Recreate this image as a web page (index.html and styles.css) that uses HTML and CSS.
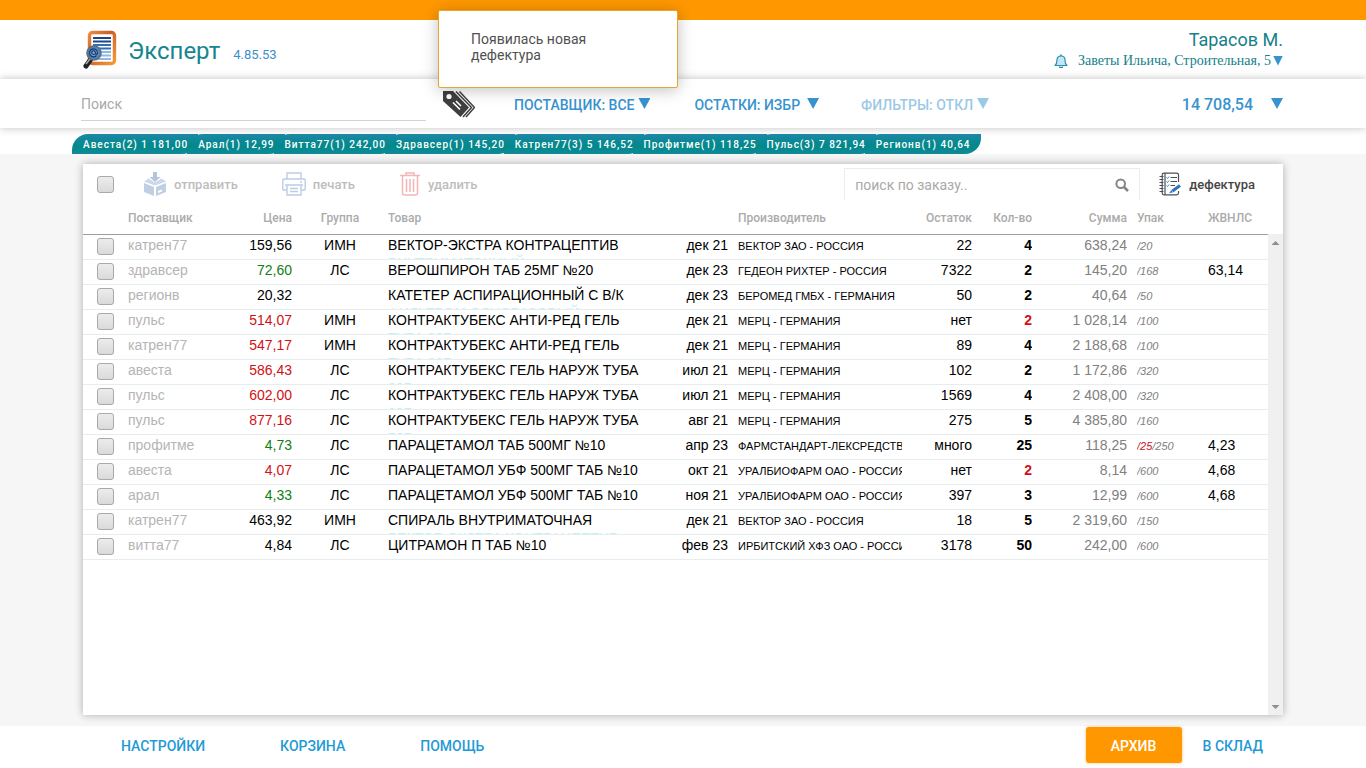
FILE: index.html
```html
<!DOCTYPE html>
<html lang="ru">
  <head>
    <meta charset="utf-8">
    <title>Эксперт</title>
    <link rel="stylesheet" href="styles.css">
  </head>
  <body>
    <div class="topline"></div>

    <header class="header">
      <div class="container header-row">
        <svg class="logo" width="34" height="40" viewBox="0 0 34 40">
          <defs>
            <linearGradient id="frame" x1="0" y1="0" x2="1" y2="1">
              <stop offset="0" stop-color="#f08a3c"/>
              <stop offset="0.4" stop-color="#c9602b"/>
              <stop offset="1" stop-color="#f79a35"/>
            </linearGradient>
            <radialGradient id="lens">
              <stop offset="0" stop-color="#8cc0ec"/>
              <stop offset="1" stop-color="#3f6fa8"/>
            </radialGradient>
          </defs>
          <rect x="6.500" y="2.500" width="25" height="31" rx="3" fill="#fff" stroke="url(#frame)" stroke-width="3.400"/>
          <path d="M10 8h18M10 11.500h18" stroke="#1c4587" stroke-width="2"/>
          <path d="M10 15h18M12 18.500h16" stroke="#2f6fb5" stroke-width="2"/>
          <path d="M16 22h12M16 25.500h12M14 29h14" stroke="#8db9e2" stroke-width="2"/>
          <path d="M8 29l-5 7" stroke="#222" stroke-width="5" stroke-linecap="round"/>
          <path d="M7 29l-4 5" stroke="#aaa" stroke-width="1.500"/>
          <circle cx="11" cy="23" r="7" fill="url(#lens)" stroke="#666f7a" stroke-width="1.600"/>
          <path d="M13.500 25.500a4 4 0 1 1 1-3c0 2.600-2.200 2.200-2.200 0a1.800 1.800 0 1 0-.5 1.300" fill="none" stroke="#143a70" stroke-width="1.200"/>
        </svg>
        <h1 class="title">Эксперт</h1>
        <span class="version">4.85.53</span>
        <div class="user">
          <div class="user-name">Тарасов М.</div>
          <button class="user-address">
            <svg class="bell" width="14" height="14" viewBox="0 0 14 14">
              <path d="M1 11.500c2-1.500 2-3 2-5.500 0-2.500 1.500-4 4-4s4 1.500 4 4c0 2.500 0 4 2 5.500z" fill="#c4e6f6" stroke="#2b8fae" stroke-width="1.200" stroke-linejoin="round"/>
              <path d="M7 2V.5M5.500 12.500a1.500 1.200 0 0 0 3 0" fill="none" stroke="#1d7f92" stroke-width="1.300"/>
            </svg>
            <span>Заветы Ильича, Строительная, 5</span>
            <i class="arrow arrow-small"></i>
          </button>
        </div>
      </div>
    </header>

    <nav class="filters">
      <div class="container filters-row">
        <input type="text" class="search" placeholder="Поиск" aria-label="Поиск">
        <button class="tags" aria-label="Метки">
          <svg width="32" height="30" viewBox="0 0 32 30">
            <path d="M0 1h10l16 16.500-8.500 9.500L0 11z" fill="#3f3f3f"/>
            <path d="M13 1.500l15.500 16-8.500 9.500M16.500 1.500l15 16-8.500 9.500" fill="none" stroke="#3f3f3f" stroke-width="1.500"/>
            <circle cx="6" cy="6.500" r="2.600" fill="#fff"/>
            <path d="M10 12.500l7 7M13 11l5 5" stroke="#fff" stroke-width="1.600"/>
          </svg>
        </button>
        <button class="filter filter-supplier">ПОСТАВЩИК: ВСЕ<i class="arrow"></i></button>
        <button class="filter filter-rest">ОСТАТКИ: ИЗБР<i class="arrow"></i></button>
        <button class="filter filter-off">ФИЛЬТРЫ: ОТКЛ<i class="arrow"></i></button>
        <button class="total">14 708,54<i class="arrow"></i></button>
      </div>
    </nav>

    <div class="suppliers">
      <div class="container suppliers-row">
        <button class="tab">Авеста(2) 1 181,00</button>
        <button class="tab">Арал(1) 12,99</button>
        <button class="tab">Витта77(1) 242,00</button>
        <button class="tab">Здравсер(1) 145,20</button>
        <button class="tab">Катрен77(3) 5 146,52</button>
        <button class="tab">Профитме(1) 118,25</button>
        <button class="tab">Пульс(3) 7 821,94</button>
        <button class="tab">Регионв(1) 40,64</button>
      </div>
    </div>

    <main class="main">
      <section class="container panel">
        <div class="toolbar">
          <input type="checkbox" class="check" aria-label="Выбрать все">
          <button class="tool tool-send">
            <svg width="24" height="26" viewBox="0 0 24 26">
              <path d="M1 12l10 4v9L1 21zM23 12l-10 4v9l10-4z" fill="#c0cfe4"/>
              <path d="M1 10.500l4.500-3 6.500 4 6.500-4 4.500 3-11 4z" fill="#cbd8ea"/>
              <path d="M10 1h4v5h3.500L12 11 6.500 6H10z" fill="#b3c4dd"/>
              <path d="M15 20l4-1.500v2L15 22z" fill="#fff"/>
            </svg>
            отправить
          </button>
          <button class="tool tool-print">
            <svg width="24" height="26" viewBox="0 0 24 26" fill="none" stroke="#bccde3" stroke-width="1.400">
              <path d="M5 8V2h14v6M5 19H2q-1.200 0-1.200-1.200V9.500Q.8 8 2.300 8h19.400q1.500 0 1.500 1.500v8.300Q23.200 19 22 19h-3"/>
              <path d="M5 14h14v10H5zM3 14h18M8 17.500h8M8 20.500h8M18 11h2"/>
            </svg>
            печать
          </button>
          <button class="tool tool-delete">
            <svg width="22" height="26" viewBox="0 0 22 26" fill="none" stroke="#f3b5b5" stroke-width="1.500">
              <path d="M1 4.500h20M7 4.500V2h8v2.500M3.500 4.500V22q0 2 2 2h11q2 0 2-2V4.500"/>
              <path d="M7.500 8v13M11 8v13M14.500 8v13"/>
            </svg>
            удалить
          </button>
          <div class="order-search">
            <input type="text" class="order-input" placeholder="поиск по заказу.." aria-label="Поиск по заказу">
            <svg width="14" height="14" viewBox="0 0 14 14" fill="none" stroke="#858585" stroke-width="2">
              <circle cx="5.700" cy="5.700" r="4.300"/>
              <path d="M9 9l4 4" stroke-width="2.500"/>
            </svg>
          </div>
          <button class="defect">
            <svg width="22" height="24" viewBox="0 0 22 24" fill="none" stroke="#4a515b" stroke-width="1.200">
              <path d="M19.500 10V3q0-1.800-1.800-1.800H5Q3.200 1.200 3.200 3v18q0 1.800 1.800 1.800h12.700q1.800 0 1.800-1.800v-2M6 1.500v21"/>
              <path d="M.5 4.500h4M.5 7.500h4M.5 10.500h4M.5 13.500h4M.5 16.500h4M.5 19.500h4"/>
              <path d="M11.500 5.500H18M11.500 9.500H18M11.500 13.500H16"/>
              <path d="M7.500 5.500l1 1 1.500-2M7.500 9.500l1 1 1.500-2M7.500 13.500l1 1 1.500-2" stroke="#3b8dc4" stroke-width="1"/>
              <path d="M21 13.500l-7.500 5.500" stroke="#2f74ba" stroke-width="3"/>
              <path d="M12.500 18l-2.500 3.200 4-1z" fill="#2f74ba" stroke="none"/>
            </svg>
            дефектура
          </button>
        </div>

        <div class="order">
          <table class="table">
            <colgroup>
              <col class="w-check"><col class="w-supplier"><col class="w-price"><col class="w-group"><col>
              <col class="w-date"><col class="w-maker"><col class="w-rest"><col class="w-count"><col class="w-sum">
              <col class="w-pack"><col class="w-vital">
            </colgroup>
            <thead>
              <tr>
                <th></th>
                <th>Поставщик</th>
                <th class="right">Цена</th>
                <th class="center">Группа</th>
                <th>Товар</th>
                <th></th>
                <th>Производитель</th>
                <th class="right">Остаток</th>
                <th class="right">Кол-во</th>
                <th class="right">Сумма</th>
                <th>Упак</th>
                <th>ЖВНЛС</th>
              </tr>
            </thead>
            <tbody id="rows"></tbody>
          </table>
          <div class="scrollbar">
            <i class="scroll-up"></i>
            <i class="scroll-down"></i>
          </div>
        </div>
      </section>
    </main>

    <footer class="footer">
      <div class="container footer-row">
        <a href="#" class="link link-settings">НАСТРОЙКИ</a>
        <a href="#" class="link link-basket">КОРЗИНА</a>
        <a href="#" class="link link-help">ПОМОЩЬ</a>
        <button class="archive">АРХИВ</button>
        <a href="#" class="link link-stock">В СКЛАД</a>
      </div>
    </footer>

    <div class="toast" role="status">Появилась новая дефектура</div>

    <script src="order.js"></script>
  </body>
</html>
```

FILE: styles.css
```css
* {
  box-sizing: border-box;
}

body {
  display: flex;
  flex-direction: column;
  min-height: 100vh;
  margin: 0;
  background: #fff;
  font-family: Roboto, sans-serif;
  font-size: 14px;
}

button {
  display: flex;
  align-items: center;
  padding: 0;
  border: none;
  background: none;
  font-family: inherit;
  cursor: pointer;
}

.container {
  width: 92%;
  max-width: 1200px;
  margin: 0 auto;
}

.arrow {
  width: 12px;
  height: 11px;
  margin-bottom: 2px;
  background: #3793d0;
  clip-path: polygon(0 0, 100% 0, 50% 100%);
}

.arrow-small {
  width: 10px;
  height: 10px;
  margin: 0 0 0 2px;
}

.topline {
  height: 20px;
  background: #ff9800;
}

/* header */

.header {
  height: 59px;
}

.header-row {
  display: flex;
  align-items: center;
  height: 100%;
}

.title {
  margin: 2px 13px 0 11px;
  color: #15868f;
  font-size: 24px;
  font-weight: 400;
}

.version {
  padding-top: 10px;
  color: #3c8fca;
  font-size: 13px;
}

.user {
  display: flex;
  flex-direction: column;
  align-items: flex-end;
  margin-left: auto;
  color: #15808a;
}

.user-name {
  font-size: 18px;
  line-height: 22px;
}

.user-address {
  color: #15808a;
  font-family: "Liberation Serif", serif;
  font-size: 14px;
  line-height: 20px;
}

.bell {
  margin-right: 10px;
}

/* filters */

.filters {
  height: 49px;
  background: #fff;
  box-shadow: 0 0 8px rgba(0, 0, 0, 0.25);
}

.filters-row {
  display: flex;
  align-items: center;
  height: 100%;
  padding-top: 2px;
}

.search {
  flex: 0 1 345px;
  min-width: 100px;
  height: 32px;
  margin-left: -2px;
  padding: 0;
  border: none;
  border-bottom: 1px solid #cfd4d8;
  outline: none;
  font-family: inherit;
  font-size: 14px;
}

.search::placeholder,
.order-input::placeholder {
  color: #a9a9a9;
}

.tags {
  margin: 0 39px 0 17px;
}

.filter,
.total {
  color: #3793d0;
  font-size: 14px;
  font-weight: 500;
  white-space: nowrap;
}

.filter .arrow {
  margin-left: 4px;
}

.filter-supplier {
  margin-right: 44px;
}

.filter-rest {
  margin-right: 42px;
}

.filter-rest .arrow {
  margin-left: 7px;
}

.filter-off {
  opacity: 0.5;
}

.total {
  gap: 18px;
  margin-left: auto;
  font-size: 16px;
}

/* supplier tabs */

.suppliers {
  height: 26px;
  padding-top: 6px;
}

.suppliers-row {
  display: flex;
}

.tab {
  flex: none;
  height: 20px;
  margin-left: -11px;
  padding: 0 10px 0 11px;
  border-radius: 16px 0 16px 0;
  background: linear-gradient(#1e87a6, #00898a 60%, #108a98);
  color: #fff;
  font-size: 10px;
  font-weight: 500;
  letter-spacing: 1px;
}

/* order panel */

.main {
  display: flex;
  flex: 1;
  padding: 10px 0 11px;
  background: #f6f6f6;
}

.panel {
  display: flex;
  flex-direction: column;
  background: #fff;
  box-shadow: 0 0 8px rgba(0, 0, 0, 0.3);
}

.toolbar {
  display: flex;
  align-items: center;
  height: 36px;
  padding: 4px 28px 0 14px;
}

.check {
  display: block;
  appearance: none;
  width: 17px;
  height: 17px;
  margin: 0;
  border: 1px solid #a9a9a9;
  border-radius: 3px;
  background: linear-gradient(#ececec, #dadada);
}

.tool,
.defect {
  font-size: 13px;
  font-weight: 500;
}

.tool {
  gap: 7px;
  color: #bdbdbd;
}

.tool-send {
  margin-left: 29px;
}

.tool-print,
.tool-delete {
  margin-left: 44px;
}

.order-search {
  display: flex;
  align-items: center;
  width: 296px;
  height: 32px;
  margin-left: auto;
  padding: 0 10px;
  border: 1px solid #ececec;
  border-bottom: none;
}

.order-input {
  flex: 1;
  min-width: 0;
  padding: 0;
  border: none;
  outline: none;
  font-family: inherit;
  font-size: 14px;
}

.defect {
  gap: 8px;
  margin-left: 19px;
  color: #454545;
}

.order {
  display: flex;
  flex: 1;
  align-items: flex-start;
}

.table {
  flex: 1;
  width: 100%;
  min-width: 0;
  table-layout: fixed;
  border-collapse: collapse;
  font-family: "Liberation Sans", Arial, sans-serif;
  font-size: 14px;
}

.w-check { width: 40px; }
.w-supplier { width: 100px; }
.w-price { width: 74px; }
.w-group { width: 86px; }
.w-date { width: 71px; }
.w-maker { width: 174px; }
.w-rest { width: 70px; }
.w-count { width: 60px; }
.w-sum { width: 95px; }
.w-pack { width: 71px; }
.w-vital { width: 65px; }

.table th {
  height: 34px;
  padding: 2px 5px 0;
  border-bottom: 1px solid #9a9f9f;
  color: #ababab;
  font-family: Roboto, sans-serif;
  font-size: 12px;
  font-weight: 500;
  text-align: left;
}

.table td {
  height: 25px;
  padding: 0 5px;
  border-bottom: 1px solid #e6eded;
  vertical-align: top;
  white-space: nowrap;
}

.table .check {
  margin: 3px 0 0 9px;
}

.cell {
  height: 24px;
  padding-top: 1px;
  line-height: 18px;
  overflow: hidden;
}

/* only the first line of a long name is readable in a row */
.product {
  padding-right: 10px;
  color: #c4eef5;
  white-space: normal;
}

.product::first-line {
  color: #000;
}

.table .right {
  text-align: right;
}

.table .center {
  text-align: center;
}

.supplier {
  color: #b5b5b5;
}

.maker {
  font-size: 11px;
  line-height: 21px;
}

.count {
  font-weight: bold;
}

.sum {
  color: #808080;
}

.pack {
  color: #808080;
  font-size: 11px;
  font-style: italic;
  line-height: 21px;
}

.red {
  color: #d40f16;
}

.green {
  color: #108010;
}

.scrollbar {
  display: flex;
  flex-direction: column;
  justify-content: space-between;
  align-items: center;
  align-self: stretch;
  width: 15px;
  margin-top: 34px;
  padding: 7px 0 6px;
  background: #f0f0f0;
}

.scroll-up,
.scroll-down {
  width: 8px;
  height: 4px;
  background: #8f8f8f;
}

.scroll-up {
  clip-path: polygon(0 100%, 100% 100%, 50% 0);
}

.scroll-down {
  clip-path: polygon(0 0, 100% 0, 50% 100%);
}

/* footer */

.footer {
  height: 42px;
  padding-top: 1px;
}

.footer-row {
  display: flex;
  align-items: center;
  padding: 0 20px 0 38px;
}

.link {
  padding-top: 1px;
  color: #1f9ad6;
  font-weight: 500;
  text-decoration: none;
}

.link-basket,
.link-help {
  margin-left: 75px;
}

.archive {
  justify-content: center;
  width: 96px;
  height: 36px;
  margin: 0 21px 0 auto;
  padding-top: 1px;
  border-radius: 3px;
  background: #ff9800;
  box-shadow: 0 0 3px rgba(255, 152, 0, 0.6);
  color: #fff;
  font-size: 14px;
  font-weight: 500;
}

.toast {
  position: absolute;
  top: 10px;
  left: 438px;
  width: 240px;
  height: 78px;
  padding: 20px 64px 20px 32px;
  border: 1px solid #e6a52f;
  border-radius: 2px;
  background: #fff;
  box-shadow: 0 2px 16px rgba(0, 0, 0, 0.25);
  color: #505050;
  font-size: 14px;
  line-height: 16px;
}
```

FILE: order.js
```js
// supplier, price, price color, group, product, date, maker, rest, count, sum, pack, vital
var order = [
  ['катрен77', '159,56', '', 'ИМН', 'ВЕКТОР-ЭКСТРА КОНТРАЦЕПТИВ ВНУТРИМАТОЧНЫЙ', 'дек 21', 'ВЕКТОР ЗАО - РОССИЯ', '22', '4', '638,24', '/20', ''],
  ['здравсер', '72,60', 'green', 'ЛС', 'ВЕРОШПИРОН ТАБ 25МГ №20', 'дек 23', 'ГЕДЕОН РИХТЕР - РОССИЯ', '7322', '2', '145,20', '/168', '63,14'],
  ['регионв', '20,32', '', '', 'КАТЕТЕР АСПИРАЦИОННЫЙ С В/К ФИЛЬТРОМ ОДНОРАЗОВЫЙ', 'дек 23', 'БЕРОМЕД ГМБХ - ГЕРМАНИЯ', '50', '2', '40,64', '/50', ''],
  ['пульс', '514,07', 'red', 'ИМН', 'КОНТРАКТУБЕКС АНТИ-РЕД ГЕЛЬ ТУБА 20Г', 'дек 21', 'МЕРЦ - ГЕРМАНИЯ', 'нет', '2', '1 028,14', '/100', ''],
  ['катрен77', '547,17', 'red', 'ИМН', 'КОНТРАКТУБЕКС АНТИ-РЕД ГЕЛЬ ТУБА 20Г', 'дек 21', 'МЕРЦ - ГЕРМАНИЯ', '89', '4', '2 188,68', '/100', ''],
  ['авеста', '586,43', 'red', 'ЛС', 'КОНТРАКТУБЕКС ГЕЛЬ НАРУЖ ТУБА 20Г', 'июл 21', 'МЕРЦ - ГЕРМАНИЯ', '102', '2', '1 172,86', '/320', ''],
  ['пульс', '602,00', 'red', 'ЛС', 'КОНТРАКТУБЕКС ГЕЛЬ НАРУЖ ТУБА 20Г', 'июл 21', 'МЕРЦ - ГЕРМАНИЯ', '1569', '4', '2 408,00', '/320', ''],
  ['пульс', '877,16', 'red', 'ЛС', 'КОНТРАКТУБЕКС ГЕЛЬ НАРУЖ ТУБА 50Г', 'авг 21', 'МЕРЦ - ГЕРМАНИЯ', '275', '5', '4 385,80', '/160', ''],
  ['профитме', '4,73', 'green', 'ЛС', 'ПАРАЦЕТАМОЛ ТАБ 500МГ №10', 'апр 23', 'ФАРМСТАНДАРТ-ЛЕКСРЕДСТВА', 'много', '25', '118,25', '<span class="red">/25</span>/250', '4,23'],
  ['авеста', '4,07', 'red', 'ЛС', 'ПАРАЦЕТАМОЛ УБФ 500МГ ТАБ №10', 'окт 21', 'УРАЛБИОФАРМ ОАО - РОССИЯ', 'нет', '2', '8,14', '/600', '4,68'],
  ['арал', '4,33', 'green', 'ЛС', 'ПАРАЦЕТАМОЛ УБФ 500МГ ТАБ №10', 'ноя 21', 'УРАЛБИОФАРМ ОАО - РОССИЯ', '397', '3', '12,99', '/600', '4,68'],
  ['катрен77', '463,92', '', 'ИМН', 'СПИРАЛЬ ВНУТРИМАТОЧНАЯ ВЕКТОР-ЭКСТРА КОНТРАЦЕПТИВ', 'дек 21', 'ВЕКТОР ЗАО - РОССИЯ', '18', '5', '2 319,60', '/150', ''],
  ['витта77', '4,84', '', 'ЛС', 'ЦИТРАМОН П ТАБ №10', 'фев 23', 'ИРБИТСКИЙ ХФЗ ОАО - РОССИЯ', '3178', '50', '242,00', '/600', '']
];

function cell(cls, text) {
  return '<td><div class="cell ' + cls + '">' + text + '</div></td>';
}

var html = '';
order.forEach(function(r) {
  // not enough in stock
  var countColor = r[7] === 'нет' ? ' red' : '';
  html += '<tr><td><input type="checkbox" class="check" aria-label="' + r[0] + ', ' + r[4] + '"></td>' +
    cell('supplier', r[0]) +
    cell('right ' + r[2], r[1]) +
    cell('center', r[3]) +
    cell('product', r[4]) +
    cell('right', r[5]) +
    cell('maker', r[6]) +
    cell('right', r[7]) +
    cell('right count' + countColor, r[8]) +
    cell('right sum', r[9]) +
    cell('pack', r[10]) +
    cell('', r[11]) + '</tr>';
});
document.getElementById('rows').innerHTML = html;
```
